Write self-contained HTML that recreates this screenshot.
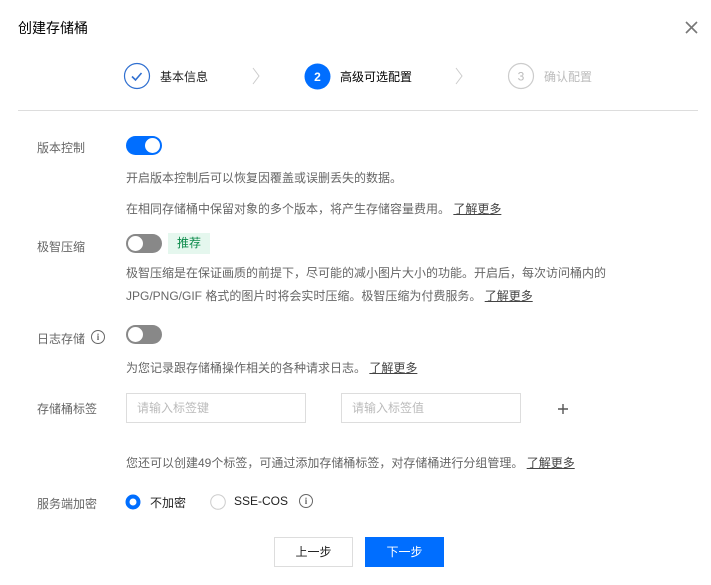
<!DOCTYPE html>
<html><head><meta charset="utf-8"><style>
*{margin:0;padding:0;box-sizing:border-box}
body{width:711px;height:585px;background:#fff;font-family:"Liberation Sans","Noto Sans CJK SC",sans-serif;font-size:12px;color:#666;position:relative;overflow:hidden}
.a{position:absolute;white-space:nowrap}
.lbl{color:#666;font-size:12px}
.d{color:#666;font-size:12px}
.lk{color:#444;text-decoration:underline}
.tg{position:absolute;width:36px;height:19px;border-radius:10px;background:#888}
.tg i{position:absolute;top:2px;left:2px;width:15px;height:15px;border-radius:50%;background:#fff}
.tg.on{background:#006eff}.tg.on i{left:19px}
.inp{position:absolute;height:30px;width:180px;border:1px solid #ddd;color:#bbb;padding-left:10px;line-height:28px}
.btn{position:absolute;width:79px;height:30px;line-height:28px;text-align:center;border:1px solid #ddd;color:#222}
.info{position:absolute;width:14px;height:14px;border:1px solid #666;border-radius:50%;font-size:9px;line-height:12px;text-align:center;color:#666;font-family:"Liberation Serif",serif;font-weight:bold}
</style></head><body>
<div class="a" style="left:18px;top:18px;font-size:14px;color:#000">创建存储桶</div>
<svg class="a" style="left:685px;top:21px" width="13" height="13"><path d="M1 1L12 12M12 1L1 12" stroke="#777" stroke-width="1.6"/></svg>

<svg class="a" style="left:123px;top:62px" width="28" height="28"><circle cx="14" cy="14" r="12.5" fill="none" stroke="#2f6fd0" stroke-width="1.2"/><path d="M9 14.5l3.5 3.5 6-7" fill="none" stroke="#2f6fd0" stroke-width="1.6"/></svg>
<div class="a" style="left:160px;top:68px;color:#222">基本信息</div>
<svg class="a" style="left:251px;top:67px" width="10" height="18"><path d="M2 1l6 8-6 8" fill="none" stroke="#ccc" stroke-width="1"/></svg>
<svg class="a" style="left:304px;top:63px" width="27" height="27"><circle cx="13.5" cy="13.5" r="13" fill="#006eff"/><text x="13.5" y="18" text-anchor="middle" font-size="12" font-weight="bold" fill="#fff" font-family="Liberation Sans">2</text></svg>
<div class="a" style="left:340px;top:68px;color:#000">高级可选配置</div>
<svg class="a" style="left:454px;top:67px" width="10" height="18"><path d="M2 1l6 8-6 8" fill="none" stroke="#ccc" stroke-width="1"/></svg>
<svg class="a" style="left:507px;top:62px" width="28" height="28"><circle cx="14" cy="14" r="12.5" fill="none" stroke="#ccc" stroke-width="1.2"/><text x="14" y="18.5" text-anchor="middle" font-size="12" fill="#bbb" font-family="Liberation Sans">3</text></svg>
<div class="a" style="left:544px;top:68px;color:#bbb">确认配置</div>
<div class="a" style="left:18px;top:110px;width:680px;height:1px;background:#ddd"></div>

<div class="a lbl" style="left:37px;top:139px">版本控制</div>
<div class="tg on" style="left:126px;top:136px"><i></i></div>
<div class="a d" style="left:126px;top:169px">开启版本控制后可以恢复因覆盖或误删丢失的数据。</div>
<div class="a d" style="left:126px;top:200px">在相同存储桶中保留对象的多个版本，将产生存储容量费用。 <span class="lk">了解更多</span></div>

<div class="a lbl" style="left:37px;top:238px">极智压缩</div>
<div class="tg" style="left:126px;top:234px"><i></i></div>
<div class="a" style="left:168px;top:233px;width:42px;height:21px;background:#e5f7ee;color:#0b8a4a;text-align:center;line-height:21px">推荐</div>
<div class="a d" style="left:126px;top:264px">极智压缩是在保证画质的前提下，尽可能的减小图片大小的功能。开启后，每次访问桶内的</div>
<div class="a d" style="left:126px;top:287px">JPG/PNG/GIF 格式的图片时将会实时压缩。极智压缩为付费服务。 <span class="lk">了解更多</span></div>

<div class="a lbl" style="left:37px;top:330px">日志存储</div>
<div class="info" style="left:91px;top:330px">i</div>
<div class="tg" style="left:126px;top:325px"><i></i></div>
<div class="a d" style="left:126px;top:359px">为您记录跟存储桶操作相关的各种请求日志。 <span class="lk">了解更多</span></div>

<div class="a lbl" style="left:37px;top:400px">存储桶标签</div>
<div class="inp" style="left:126px;top:393px">请输入标签键</div>
<div class="inp" style="left:341px;top:393px">请输入标签值</div>
<svg class="a" style="left:557px;top:403px" width="12" height="12"><path d="M6 1v10M1 6h10" stroke="#555" stroke-width="1.4"/></svg>
<div class="a d" style="left:126px;top:454px">您还可以创建49个标签，可通过添加存储桶标签，对存储桶进行分组管理。 <span class="lk">了解更多</span></div>

<div class="a lbl" style="left:37px;top:495px">服务端加密</div>
<svg class="a" style="left:125px;top:494px" width="16" height="16"><circle cx="8" cy="8" r="5.5" fill="none" stroke="#006eff" stroke-width="4"/></svg>
<div class="a" style="left:150px;top:494px;color:#222">不加密</div>
<svg class="a" style="left:210px;top:494px" width="16" height="16"><circle cx="8" cy="8" r="7.3" fill="none" stroke="#ccc" stroke-width="1"/></svg>
<div class="a" style="left:234px;top:494px;color:#222">SSE-COS</div>
<div class="info" style="left:299px;top:494px">i</div>

<div class="btn" style="left:274px;top:537px">上一步</div>
<div class="btn" style="left:365px;top:537px;background:#006eff;border-color:#006eff;color:#fff">下一步</div>
</body></html>
